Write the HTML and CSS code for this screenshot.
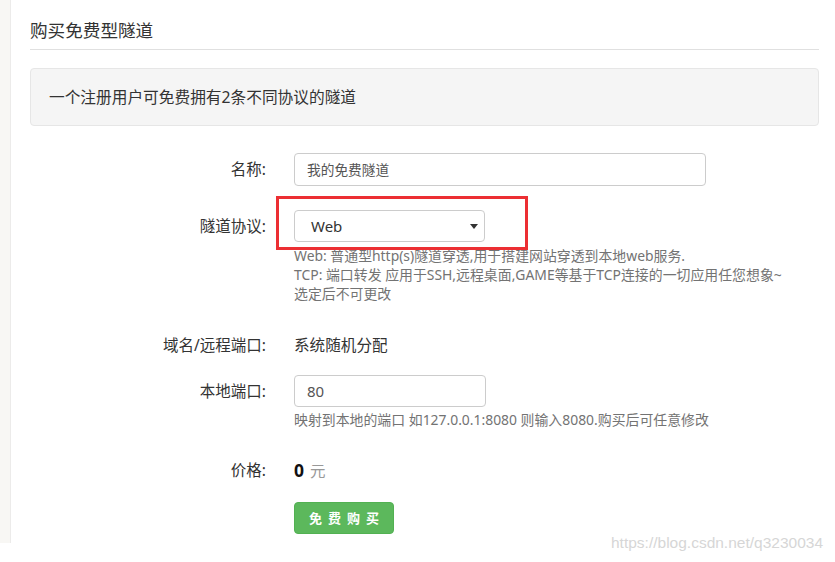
FILE: index.html
```html
<!DOCTYPE html>
<html lang="zh-CN">
<head>
<meta charset="utf-8">
<title>购买免费型隧道</title>
<link rel="stylesheet" href="styles.css">
</head>
<body>
<div class="page">
  <div class="side"></div>
  <div class="main">
    <h3 class="title">购买免费型隧道</h3>
    <div class="well">一个注册用户可免费拥有2条不同协议的隧道</div>
    <div class="form">
      <div class="row row-name">
        <div class="label">名称:</div>
        <div class="ctrl">
          <div class="input input-wide">我的免费隧道</div>
        </div>
      </div>
      <div class="row row-proto">
        <div class="label">隧道协议:</div>
        <div class="ctrl">
          <div class="select">
            <span>Web</span>
            <svg class="caret" width="8" height="5" viewBox="0 0 8 5"><path d="M0 0 H8 L4 5 Z" fill="#333"/></svg>
            <div class="mark"></div>
          </div>
          <div class="help">
            <div>Web: 普通型http(s)隧道穿透,用于搭建网站穿透到本地web服务.</div>
            <div>TCP: 端口转发 应用于SSH,远程桌面,GAME等基于TCP连接的一切应用任您想象~</div>
            <div>选定后不可更改</div>
          </div>
        </div>
      </div>
      <div class="row row-domain">
        <div class="label text">域名/远程端口:</div>
        <div class="ctrl"><div class="value">系统随机分配</div></div>
      </div>
      <div class="row row-port">
        <div class="label">本地端口:</div>
        <div class="ctrl">
          <div class="input input-short">80</div>
          <div class="help help-one">映射到本地的端口 如127.0.0.1:8080 则输入8080.购买后可任意修改</div>
        </div>
      </div>
      <div class="row row-price">
        <div class="label text">价格:</div>
        <div class="ctrl"><div class="value"><b class="num">0</b> <span class="unit">元</span></div></div>
      </div>
      <div class="row row-btn">
        <div class="label"></div>
        <div class="ctrl"><button class="btn">免费购买</button></div>
      </div>
    </div>
  </div>
  <div class="watermark">https://blog.csdn.net/q3230034</div>
</div>
</body>
</html>
```
FILE: styles.css
```css
html, body {
  margin: 0;
  padding: 0;
  background: #fff;
}
body {
  font-family: "Noto Sans", "Noto Sans CJK SC", sans-serif;
  color: #333;
  font-size: 15.5px;
  width: 835px;
  height: 562px;
  overflow: hidden;
}
.page {
  position: relative;
  display: flex;
  align-items: flex-start;
  width: 835px;
  height: 562px;
}
.side {
  width: 10px;
  height: 543px;
  background: #f8f7f4;
  border-right: 1px solid #ecebea;
  flex: none;
}
.main {
  width: 789px;
  margin-left: 19px;
  flex: none;
}
.title {
  margin: 18px 0 0;
  padding: 0 0 7px;
  font-size: 17.6px;
  line-height: 24px;
  font-weight: normal;
  color: #333;
  border-bottom: 1px solid #e0e0e0;
}
.well {
  margin-top: 18px;
  height: 56px;
  box-sizing: content-box;
  padding: 0 18px;
  line-height: 56px;
  background: #f5f5f5;
  border: 1px solid #e6e6e6;
  border-radius: 4px;
  font-size: 15.7px;
}
.form {
  margin-top: 27px;
}
.row {
  display: flex;
  align-items: flex-start;
}
.label {
  width: 236px;
  flex: none;
  text-align: right;
  font-size: 15.5px;
}
.ctrl {
  margin-left: 28px;
  flex: 1;
  position: relative;
}
.row-name .label { line-height: 33px; }
.row-name { margin-bottom: 24px; }
.input {
  box-sizing: border-box;
  height: 33px;
  border: 1px solid #ccc;
  border-radius: 4px;
  padding: 0 12px;
  line-height: 31px;
  font-size: 13.7px;
  color: #555;
  background: #fff;
}
.input-wide { width: 412px; }
.input-short { width: 192px; height: 32px; line-height: 30px; font-size: 15px; }
.row-proto .label { line-height: 32px; }
.select {
  position: relative;
  box-sizing: border-box;
  width: 191px;
  height: 32px;
  border: 1px solid #ccc;
  border-radius: 4px;
  padding: 0 16px;
  line-height: 30px;
  font-size: 15px;
  color: #333;
  background: #fff;
  display: flex;
  align-items: center;
  justify-content: space-between;
}
.select span { line-height: 30px; }
.caret { margin-right: -10px; }
.mark {
  position: absolute;
  left: -19px;
  top: -15px;
  width: 246px;
  height: 48px;
  border: 3px solid #ec2f33;
  pointer-events: none;
}
.help {
  margin-top: 4px;
  font-size: 13.9px;
  line-height: 19px;
  color: #737373;
  white-space: nowrap;
}
.help-one { margin-top: 3px; }
.row-proto { margin-bottom: 31px; }
.text { line-height: 22px; }
.value { line-height: 22px; font-size: 15.6px; color: #333; }
.row-domain { margin-bottom: 19px; }
.row-port .label { line-height: 32px; }
.row-port { margin-bottom: 30px; }
.num { font-size: 17.5px; font-weight: bold; color: #111; }
.unit { color: #999; font-size: 15.5px; margin-left: 2px; }
.row-price { margin-bottom: 20px; }
.btn {
  width: 100px;
  height: 32px;
  background: #5cb85c;
  border: 1px solid #52b152;
  border-radius: 4px;
  color: #fff;
  font-family: "Noto Sans CJK SC", sans-serif;
  font-size: 13px;
  font-weight: bold;
  letter-spacing: 6px;
  padding: 0 0 0 6px;
  line-height: 30px;
  cursor: pointer;
}
.watermark {
  position: absolute;
  left: 611px;
  top: 532px;
  font-family: "Liberation Sans", Arial, sans-serif;
  font-size: 15.5px;
  line-height: 22px;
  color: #d6d6d6;
  white-space: nowrap;
}
```
